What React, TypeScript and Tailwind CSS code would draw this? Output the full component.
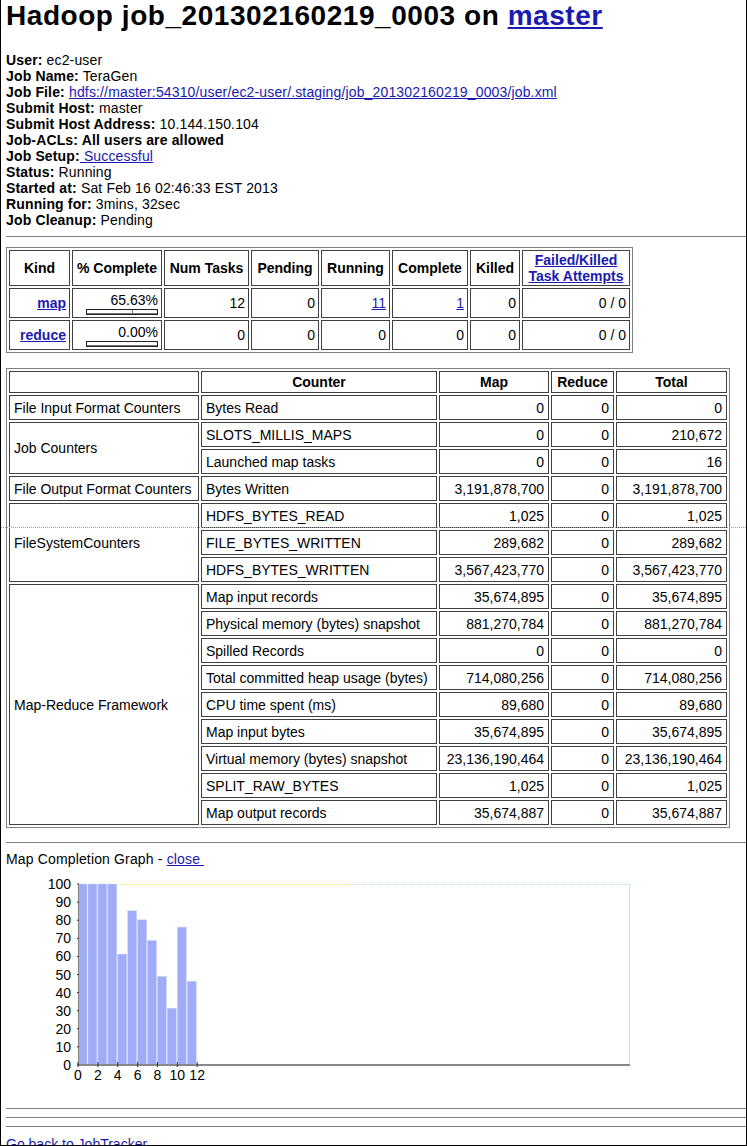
import React from "react";

const LINK = "text-[#1a1ab0] underline";

type Row = [string, string, string, string];
const groups: { name: string; rows: Row[] }[] = [
  { name: "File Input Format Counters", rows: [["Bytes Read", "0", "0", "0"]] },
  {
    name: "Job Counters",
    rows: [
      ["SLOTS_MILLIS_MAPS", "0", "0", "210,672"],
      ["Launched map tasks", "0", "0", "16"],
    ],
  },
  {
    name: "File Output Format Counters",
    rows: [["Bytes Written", "3,191,878,700", "0", "3,191,878,700"]],
  },
  {
    name: "FileSystemCounters",
    rows: [
      ["HDFS_BYTES_READ", "1,025", "0", "1,025"],
      ["FILE_BYTES_WRITTEN", "289,682", "0", "289,682"],
      ["HDFS_BYTES_WRITTEN", "3,567,423,770", "0", "3,567,423,770"],
    ],
  },
  {
    name: "Map-Reduce Framework",
    rows: [
      ["Map input records", "35,674,895", "0", "35,674,895"],
      ["Physical memory (bytes) snapshot", "881,270,784", "0", "881,270,784"],
      ["Spilled Records", "0", "0", "0"],
      ["Total committed heap usage (bytes)", "714,080,256", "0", "714,080,256"],
      ["CPU time spent (ms)", "89,680", "0", "89,680"],
      ["Map input bytes", "35,674,895", "0", "35,674,895"],
      ["Virtual memory (bytes) snapshot", "23,136,190,464", "0", "23,136,190,464"],
      ["SPLIT_RAW_BYTES", "1,025", "0", "1,025"],
      ["Map output records", "35,674,887", "0", "35,674,887"],
    ],
  },
];

const bars = [100, 100, 100, 100, 61.3, 85.2, 80.2, 68.8, 48.9, 31.4, 76.2, 46.3];

function Progress({ pct }: { pct: number }) {
  return (
    <div className="ml-auto mt-[1px] w-[72px] h-[6px] border border-[#222] flex">
      {pct > 0 && (
        <div style={{ width: `${pct}%` }} className="h-full border-b border-r border-[#777]" />
      )}
      <div className="h-full flex-1 border-b border-[#777]" />
    </div>
  );
}

function Graph() {
  const X0 = 72;
  const XU = 9.93;
  const YB = 193;
  const YU = 1.81;
  const yl = [0, 10, 20, 30, 40, 50, 60, 70, 80, 90, 100];
  const xl = [0, 2, 4, 6, 8, 10, 12];
  return (
    <svg width="640" height="220" className="block mt-[5px]" style={{ fontFamily: "'Liberation Sans', Arial, sans-serif" }}>
      <line x1={X0} y1={12.5} x2={344} y2={12.5} stroke="#eee2a0" strokeDasharray="1 1" />
      <line x1={344} y1={12.5} x2={624} y2={12.5} stroke="#c6dcee" strokeDasharray="1 1" />
      <line x1={623.5} y1={12} x2={623.5} y2={193} stroke="#cfe3ef" />
      {bars.map((v, i) => (
        <rect key={i} x={X0 + i * XU} y={YB - v * YU} width={9} height={v * YU} fill="#a0acf7" stroke="#c8d6f4" strokeWidth={0.5} />
      ))}
      <line x1={X0 + 0.5} y1={12} x2={X0 + 0.5} y2={193} stroke="#8a8a8a" />
      <rect x={X0} y={192} width={552} height={2} fill="#888" />
      {yl.map((v) => (
        <g key={v}>
          <rect x={X0 - 1} y={YB - v * YU - 0.5} width={2} height={1} fill="#333" />
          <text x={65} y={YB - v * YU + 5} textAnchor="end" fontSize="14" fill="#000">
            {v}
          </text>
        </g>
      ))}
      {xl.map((k) => (
        <g key={k}>
          <rect x={X0 + k * XU - 0.5} y={190} width={1} height={5} fill="#333" />
          <text x={X0 + k * XU} y={208} textAnchor="middle" fontSize="14" fill="#000">
            {k}
          </text>
        </g>
      ))}
    </svg>
  );
}

export default function App() {
  const th1 = "border border-[#404040] px-[3px] py-[1px] h-[36px] text-center align-middle font-bold whitespace-nowrap";
  const td1 = "border border-[#404040] px-[3px] py-0 h-[30px] text-right align-middle whitespace-nowrap";
  const th2 = "border border-[#404040] px-[4px] py-0 h-[22px] text-center align-middle font-bold whitespace-nowrap";
  const td2 = "border border-[#404040] px-[4px] py-0 h-[25px] align-middle whitespace-nowrap";

  const info: React.ReactNode[] = [
    <><b>User:</b> ec2-user</>,
    <><b>Job Name:</b> TeraGen</>,
    <><b>Job File:</b> <a className={LINK}>hdfs://master:54310/user/ec2-user/.staging/job_201302160219_0003/job.xml</a></>,
    <><b>Submit Host:</b> master</>,
    <><b>Submit Host Address:</b> 10.144.150.104</>,
    <><b>Job-ACLs: All users are allowed</b></>,
    <><b>Job Setup:</b><a className={LINK}>{"\u00a0Successful"}</a></>,
    <><b>Status:</b> Running</>,
    <><b>Started at:</b> Sat Feb 16 02:46:33 EST 2013</>,
    <><b>Running for:</b> 3mins, 32sec</>,
    <><b>Job Cleanup:</b> Pending</>,
  ];

  return (
    <div className="relative w-[747px] h-[1146px] overflow-hidden bg-white border-l border-r border-b border-black text-black font-['Liberation_Sans',Arial,sans-serif] text-[14px] leading-[16px]">
      <div className="pl-[5px]">
        <h1 className="text-[28px] leading-[32px] font-bold tracking-[0.55px] mb-[20px]">
          Hadoop job_201302160219_0003 on <a className={LINK}>master</a>
        </h1>
        <div className="tracking-[0.15px]">
          {info.map((n, i) => (
            <div key={i} className="h-[16px] whitespace-nowrap">
              {n}
            </div>
          ))}
        </div>
        <hr className="mt-[8px] border-0 border-t border-[#808080]" />

        <table className="mt-[10px] w-[627px] table-fixed border-separate border-spacing-[2px] border border-[#808080]">
          <tbody>
            <tr>
              <th className={`${th1} w-[61px]`}>Kind</th>
              <th className={`${th1} w-[90px]`}>% Complete</th>
              <th className={`${th1} w-[85px]`}>Num Tasks</th>
              <th className={`${th1} w-[68px]`}>Pending</th>
              <th className={`${th1} w-[69px]`}>Running</th>
              <th className={`${th1} w-[76px]`}>Complete</th>
              <th className={`${th1} w-[50px]`}>Killed</th>
              <th className={`${th1} w-[108px]`}>
                <a className={LINK}>
                  Failed/Killed
                  <br />
                  Task Attempts
                </a>
              </th>
            </tr>
            <tr>
              <td className={`${td1} text-center`}>
                <a className={`${LINK} font-bold`}>map</a>
              </td>
              <td className={td1}>
                <div>65.63%</div>
                <Progress pct={65.63} />
              </td>
              <td className={td1}>12</td>
              <td className={td1}>0</td>
              <td className={td1}>
                <a className={LINK}>11</a>
              </td>
              <td className={td1}>
                <a className={LINK}>1</a>
              </td>
              <td className={td1}>0</td>
              <td className={td1}>0 / 0</td>
            </tr>
            <tr>
              <td className={`${td1} text-center`}>
                <a className={`${LINK} font-bold`}>reduce</a>
              </td>
              <td className={td1}>
                <div>0.00%</div>
                <Progress pct={0} />
              </td>
              <td className={td1}>0</td>
              <td className={td1}>0</td>
              <td className={td1}>0</td>
              <td className={td1}>0</td>
              <td className={td1}>0</td>
              <td className={td1}>0 / 0</td>
            </tr>
          </tbody>
        </table>

        <table className="mt-[15px] w-[724px] table-fixed border-separate border-spacing-[2px] border border-[#808080]">
          <tbody>
            <tr>
              <th className={`${th2} w-[190px]`}></th>
              <th className={`${th2} w-[236px]`}>Counter</th>
              <th className={`${th2} w-[110px]`}>Map</th>
              <th className={`${th2} w-[63px]`}>Reduce</th>
              <th className={`${th2} w-[111px]`}>Total</th>
            </tr>
            {groups.map((g) =>
              g.rows.map((r, i) => (
                <tr key={g.name + i}>
                  {i === 0 && (
                    <td rowSpan={g.rows.length} className={`${td2} text-left`}>
                      {g.name}
                    </td>
                  )}
                  <td className={`${td2} text-left`}>{r[0]}</td>
                  <td className={`${td2} text-right`}>{r[1]}</td>
                  <td className={`${td2} text-right`}>{r[2]}</td>
                  <td className={`${td2} text-right`}>{r[3]}</td>
                </tr>
              ))
            )}
          </tbody>
        </table>

        <hr className="mt-[14px] border-0 border-t border-[#808080]" />
        <div className="mt-[8px] h-[16px] tracking-[0.15px]">
          Map Completion Graph - <a className={LINK}>{"close\u00a0"}</a>
        </div>
        <Graph />
        <hr className="mt-[16px] border-0 border-t border-[#808080]" />
        <hr className="mt-[8px] border-0 border-t border-[#808080]" />
        <hr className="mt-[8px] border-0 border-t border-[#808080]" />
        <div className="mt-[9px]">
          <a className={LINK}>Go back to JobTracker</a>
        </div>
      </div>
      <div className="absolute left-0 right-0 top-[527px] border-t border-dotted border-[#9aa6b2]" />
    </div>
  );
}
